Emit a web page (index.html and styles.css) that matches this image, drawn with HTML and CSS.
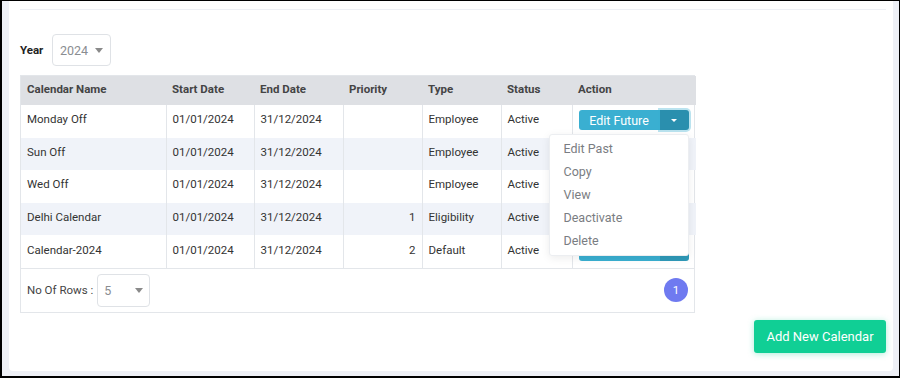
FILE: index.html
```html
<!DOCTYPE html>
<html lang="en">
<head>
  <meta charset="UTF-8">
  <title>Calendars</title>
  <link rel="stylesheet" href="styles.css">
</head>
<body>
  <div class="frame">
    <div class="card">
      <div class="card-top"></div>

      <div class="year-row">
        <label class="year-label">Year</label>
        <div class="select year-select">
          <span>2024</span>
          <span class="caret"></span>
        </div>
      </div>

      <div class="grid-box">
        <table class="grid">
          <colgroup>
            <col style="width:145px"><col style="width:88px"><col style="width:89px">
            <col style="width:79px"><col style="width:79px"><col style="width:71px"><col style="width:124px">
          </colgroup>
          <thead>
            <tr><th>Calendar Name</th><th>Start Date</th><th>End Date</th><th>Priority</th><th>Type</th><th>Status</th><th>Action</th></tr>
          </thead>
          <tbody id="rows"></tbody>
        </table>

        <div class="grid-footer">
          <span class="rows-label">No Of Rows :</span>
          <div class="select rows-select">
            <span>5</span>
            <span class="caret"></span>
          </div>
          <span class="page-badge">1</span>
        </div>
      </div>

      <div class="actions">
        <button class="btn-add">Add New Calendar</button>
      </div>
    </div>
  </div>

  <script>
    const calendars = [
      { name: "Monday Off", start: "01/01/2024", end: "31/12/2024", priority: "", type: "Employee", status: "Active" },
      { name: "Sun Off", start: "01/01/2024", end: "31/12/2024", priority: "", type: "Employee", status: "Active" },
      { name: "Wed Off", start: "01/01/2024", end: "31/12/2024", priority: "", type: "Employee", status: "Active" },
      { name: "Delhi Calendar", start: "01/01/2024", end: "31/12/2024", priority: 1, type: "Eligibility", status: "Active" },
      { name: "Calendar-2024", start: "01/01/2024", end: "31/12/2024", priority: 2, type: "Default", status: "Active" }
    ];

    const menu = `<ul class="menu">
      <li>Edit Past</li><li>Copy</li><li>View</li><li>Deactivate</li><li>Delete</li>
    </ul>`;

    const tbody = document.getElementById("rows");
    calendars.forEach((c, i) => {
      tbody.innerHTML += `<tr>
        <td>${c.name}</td><td>${c.start}</td><td>${c.end}</td>
        <td class="num">${c.priority}</td><td>${c.type}</td><td>${c.status}</td>
        <td><div class="split${i === 0 ? " open" : ""}">
          <button class="split-main">Edit Future</button><button class="split-toggle"><span class="tiny-caret"></span></button>
          ${i === 0 ? menu : ""}
        </div></td>
      </tr>`;
    });
  </script>
</body>
</html>
```

FILE: styles.css
```css
* {
  box-sizing: border-box;
}
html, body {
  margin: 0;
  padding: 0;
}
body {
  font-family: Roboto, "Liberation Sans", sans-serif;
  color: #343a40;
  font-size: 11.5px;
}
.frame {
  width: 900px;
  height: 378px;
  border: 1px solid #000;
  border-left-width: 2px;
  border-bottom-width: 2px;
  background: #eef0f6;
  padding: 0 6px 5px 7px;
}
.card {
  background: #fff;
  height: 100%;
  border-radius: 0 0 4px 4px;
  padding: 0 7px 0 11px;
}
.card-top {
  height: 9px;
  border-bottom: 1px solid #eef0f5;
}
.year-row {
  display: flex;
  align-items: center;
  margin-top: 24px;
  height: 32px;
}
.year-label {
  font-weight: bold;
  font-size: 11.5px;
  color: #222;
  width: 32px;
}
.select {
  display: flex;
  align-items: center;
  justify-content: space-between;
  flex-shrink: 0;
  border: 1px solid #dfe2e6;
  border-radius: 4px;
  color: #8a8d91;
  font-size: 12.5px;
  padding: 0 7px;
}
.year-select {
  width: 59px;
  height: 32px;
}
.caret {
  width: 0;
  height: 0;
  border-left: 4.5px solid transparent;
  border-right: 4.5px solid transparent;
  border-top: 5px solid #8a8a8a;
}
.grid-box {
  margin-top: 9px;
  width: 675px;
  border: 1px solid #e3e6ea;
}
.grid {
  width: 100%;
  border-collapse: collapse;
  table-layout: fixed;
}
.grid th {
  background: #dee0e4;
  height: 29px;
  text-align: left;
  font-weight: bold;
  color: #444;
  padding: 0 6px 3px;
  font-size: 11.5px;
}
.grid td {
  height: 32.6px;
  padding: 0 6px 4px;
  border-left: 1px solid #e3e6ea;
  color: #333;
  white-space: nowrap;
}
.grid td:first-child {
  border-left: none;
}
.grid tbody tr:nth-child(even) td {
  background: #f0f3f9;
}
.grid td.num {
  text-align: right;
}
.split {
  position: relative;
  display: flex;
  width: 110px;
  height: 20px;
  margin-top: 2px;
}
.split button {
  border: none;
  color: #fff;
  font-family: inherit;
  cursor: pointer;
}
.split-main {
  width: 81px;
  background: #3aafd1;
  font-size: 12.5px;
  border-radius: 3px 0 0 3px;
  padding: 0;
}
.split-toggle {
  width: 29px;
  background: #2f9ab9;
  border-radius: 0 3px 3px 0;
  display: flex;
  align-items: center;
  justify-content: center;
}
.split.open .split-toggle {
  box-shadow: 0 0 0 2px rgba(58, 175, 209, 0.35);
  background: #2a8fae;
}
.tiny-caret {
  width: 0;
  height: 0;
  border-left: 3px solid transparent;
  border-right: 3px solid transparent;
  border-top: 3px solid #fff;
}
.menu {
  position: absolute;
  right: 0;
  top: 24px;
  width: 140px;
  margin: 0;
  padding: 2px 0 3px;
  list-style: none;
  background: #fff;
  border: 1px solid #eceef1;
  border-radius: 3px;
  box-shadow: 0 2px 8px rgba(0, 0, 0, 0.08);
  z-index: 5;
}
.menu li {
  height: 23px;
  line-height: 23px;
  padding-left: 14px;
  font-size: 12.5px;
  color: #7a7d82;
}
.grid-footer {
  display: flex;
  align-items: center;
  height: 44px;
  border-top: 1px solid #e3e6ea;
  padding: 0 6px;
}
.rows-label {
  font-size: 11.5px;
  color: #444;
  margin-right: 4px;
}
.rows-select {
  width: 53px;
  height: 33px;
  padding-left: 6px;
  padding-right: 6px;
}
.page-badge {
  margin-left: auto;
  width: 24px;
  height: 24px;
  border-radius: 50%;
  background: #6f7af0;
  color: #fff;
  font-size: 11.5px;
  display: flex;
  align-items: center;
  justify-content: center;
}
.actions {
  display: flex;
  justify-content: flex-end;
  margin-top: 7px;
}
.btn-add {
  width: 132px;
  height: 33px;
  background: #10cf95;
  color: #fff;
  border: none;
  border-radius: 3px;
  font-family: inherit;
  font-size: 13px;
  box-shadow: 0 1px 6px rgba(16, 207, 149, 0.35);
  cursor: pointer;
}
```
